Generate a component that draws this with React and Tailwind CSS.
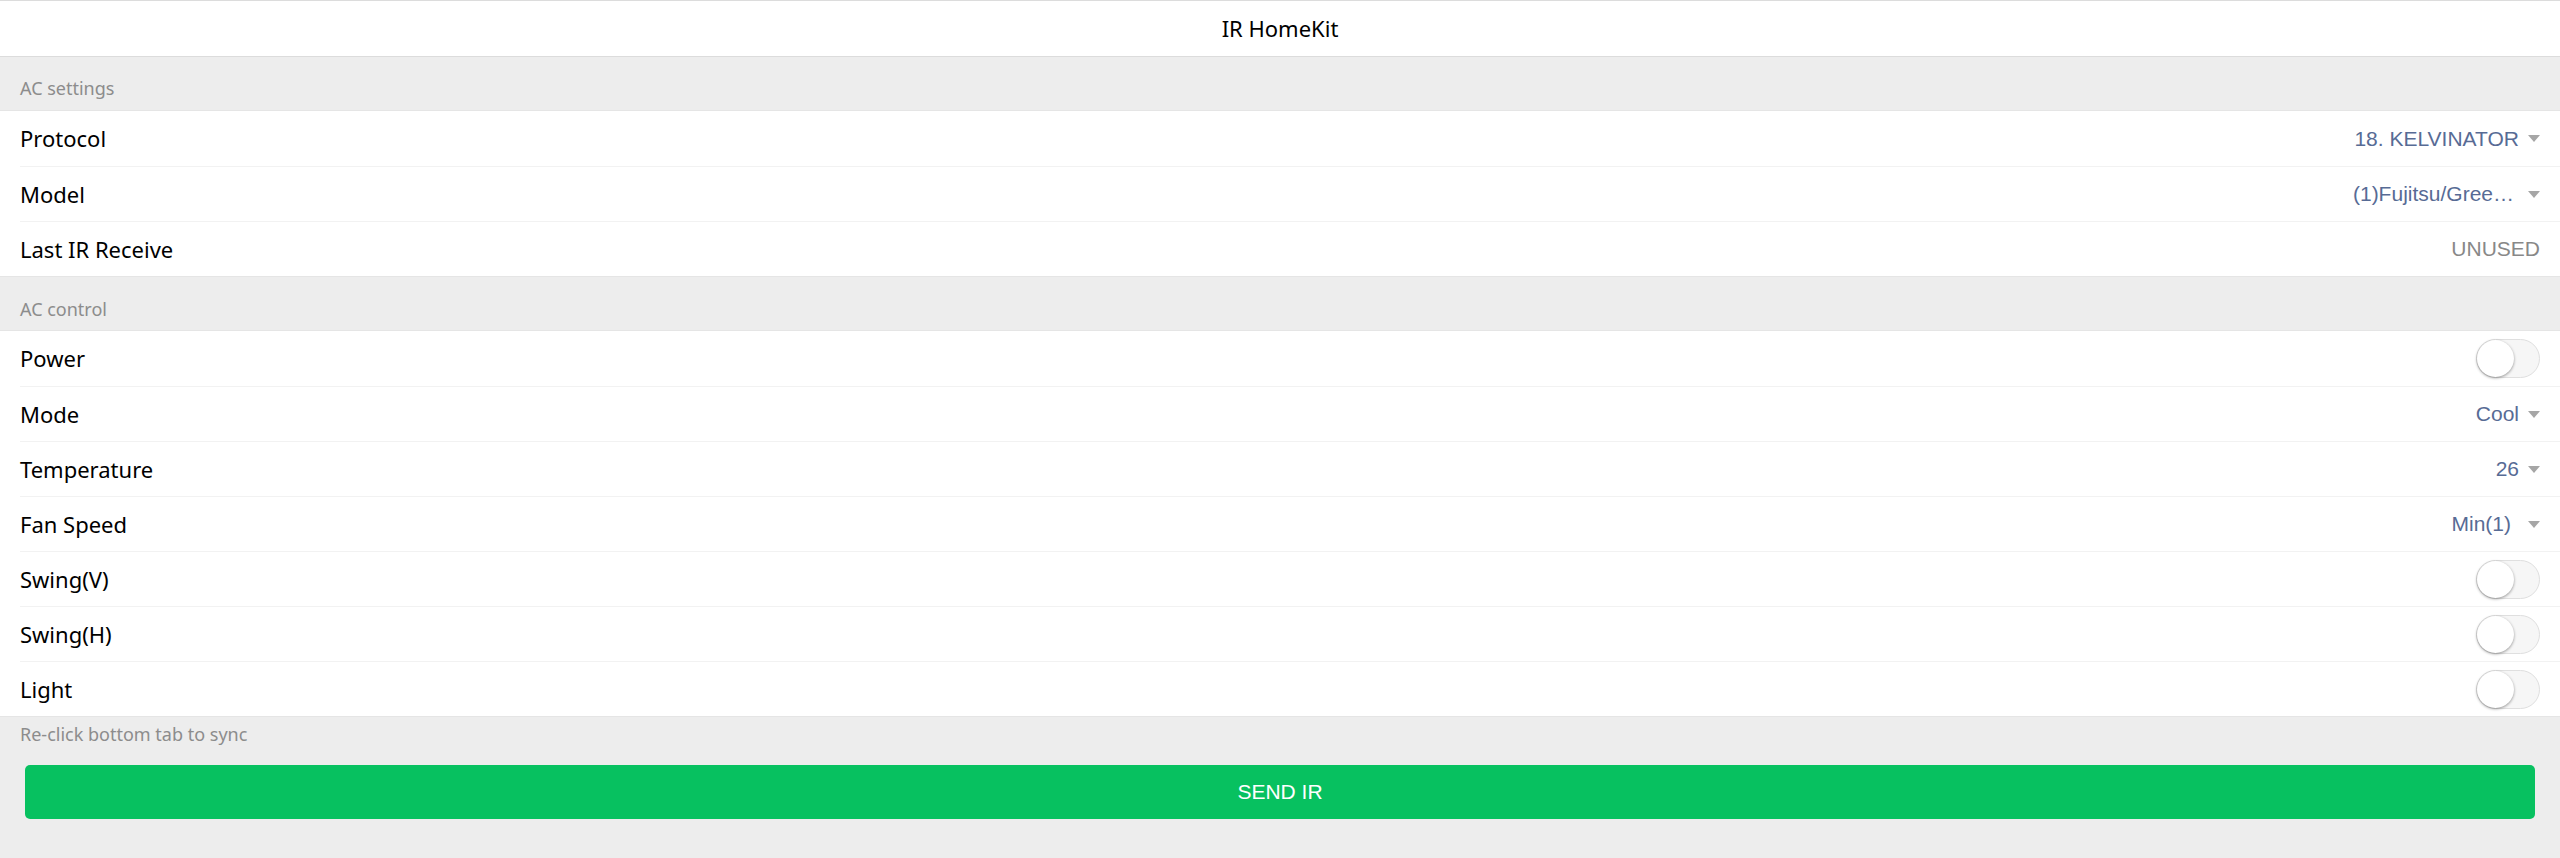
import React from "react";

const labelFont = { fontFamily: '"Noto Sans", "Open Sans", sans-serif' };

const Arrow = () => (
  <svg width="12" height="7" viewBox="0 0 12 7" className="shrink-0">
    <path d="M0 0 L12 0 L6 7 Z" fill="#a6a6a6" />
  </svg>
);

const Toggle = () => (
  <div className="w-[64px] h-[39px] rounded-full border border-[#dfdfdf] bg-[#f6f6f6] flex items-center">
    <div className="w-[37px] h-[37px] rounded-full bg-white shadow-[0_1px_3px_rgba(0,0,0,0.4)]" />
  </div>
);

const SelectValue = ({ text, pad = "pr-[9px]" }) => (
  <div className="flex items-center">
    <span className={`font-['Liberation_Sans',Arial,sans-serif] text-[21px] text-[#576b95] ${pad}`}>
      {text}
    </span>
    <Arrow />
  </div>
);

const Row = ({ label, children, first }) => (
  <div
    className={`h-[55px] flex items-center justify-between pr-[20px] ${
      first ? "" : "border-t border-[#f2f2f2]"
    }`}
  >
    <span className="text-[22px] text-black" style={labelFont}>
      {label}
    </span>
    {children}
  </div>
);

const SectionTitle = ({ children, top }) => (
  <div
    className={`px-[20px] ${top} text-[18px] leading-[26px] text-[#8c8c8c]`}
    style={labelFont}
  >
    {children}
  </div>
);

export default function App() {
  return (
    <div className="w-[2560px] h-[858px] bg-[#ededed] flex flex-col">
      {/* Header */}
      <div className="h-[57px] bg-white border-t border-b border-[#dcdcdc] flex items-center justify-center">
        <span className="text-[22px] text-black" style={labelFont}>
          IR HomeKit
        </span>
      </div>

      {/* AC settings */}
      <SectionTitle top="pt-[18px] pb-[9px]">AC settings</SectionTitle>
      <div className="bg-white pl-[20px] border-t border-b border-[#e5e5e5]">
        <Row label="Protocol" first>
          <SelectValue text="18. KELVINATOR" />
        </Row>
        <Row label="Model">
          <SelectValue text="(1)Fujitsu/Gree…" pad="pr-[14px]" />
        </Row>
        <Row label="Last IR Receive">
          <span className="font-['Liberation_Sans',Arial,sans-serif] text-[21px] text-[#888]">
            UNUSED
          </span>
        </Row>
      </div>

      {/* AC control */}
      <SectionTitle top="pt-[19px] pb-[8px]">AC control</SectionTitle>
      <div className="bg-white pl-[20px] border-t border-b border-[#e5e5e5]">
        <Row label="Power" first>
          <Toggle />
        </Row>
        <Row label="Mode">
          <SelectValue text="Cool" />
        </Row>
        <Row label="Temperature">
          <SelectValue text="26" />
        </Row>
        <Row label="Fan Speed">
          <SelectValue text="Min(1)" pad="pr-[17px]" />
        </Row>
        <Row label="Swing(V)">
          <Toggle />
        </Row>
        <Row label="Swing(H)">
          <Toggle />
        </Row>
        <Row label="Light">
          <Toggle />
        </Row>
      </div>

      {/* Footer */}
      <SectionTitle top="pt-[4px] pb-0">Re-click bottom tab to sync</SectionTitle>
      <div className="px-[25px] mt-[18px]">
        <button className="w-full h-[54px] rounded-[5px] bg-[#07c160] text-white text-[21px] font-['Liberation_Sans',Arial,sans-serif]">
          SEND IR
        </button>
      </div>
    </div>
  );
}
